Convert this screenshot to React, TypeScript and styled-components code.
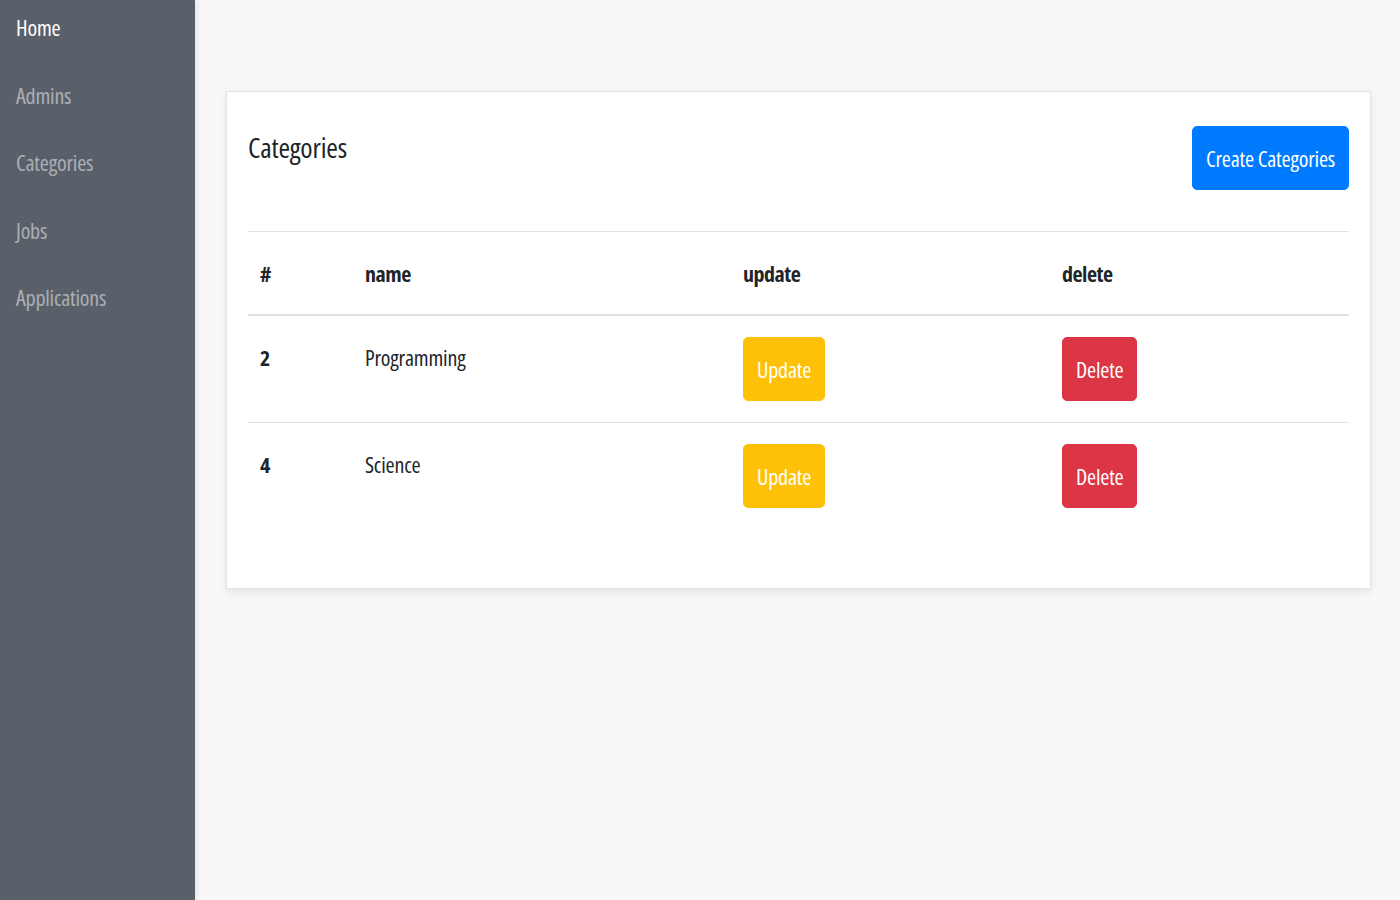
import React from "react";
import styled, { createGlobalStyle } from "styled-components";

const GlobalStyle = createGlobalStyle`
  html, body { margin: 0; padding: 0; }
  body {
    background: #f8f8f8;
    font-family: "Open Sans", "Noto Sans", sans-serif;
    font-stretch: 75%;
    letter-spacing: -0.2px;
    color: #212529;
  }
  * { box-sizing: border-box; }
`;

const Layout = styled.div`
  display: flex;
  min-height: 900px;
`;

const Sidebar = styled.nav`
  width: 195px;
  flex-shrink: 0;
  background: #59606a;
  box-shadow: 2px 0 6px rgba(0, 0, 0, 0.08);
  display: flex;
  flex-direction: column;
`;

const NavLink = styled.a<{ $active?: boolean }>`
  display: block;
  padding: 10px 16px 23.5px;
  font-size: 22px;
  line-height: 34px;
  color: ${(p) => (p.$active ? "#ffffff" : "rgba(255,255,255,0.5)")};
  text-decoration: none;
  cursor: pointer;
`;

const Main = styled.main`
  flex: 1;
  padding: 91px 29px 30px 31px;
`;

const Card = styled.section`
  background: #fff;
  border: 1px solid #e4e4e4;
  box-shadow: 0 3px 8px rgba(0, 0, 0, 0.09);
  padding: 34px 21px 59px;
`;

const Header = styled.div`
  display: flex;
  justify-content: space-between;
  align-items: flex-start;
  margin-bottom: 41px;
`;

const Title = styled.h2`
  margin: 2px 0 0;
  font-size: 28px;
  font-weight: 400;
  line-height: 38px;
`;

const Button = styled.button<{ $variant: "primary" | "warning" | "danger" }>`
  font-family: inherit;
  font-stretch: 75%;
  letter-spacing: -0.2px;
  font-size: 22px;
  line-height: 40px;
  padding: 11px 13px;
  border: 1px solid transparent;
  border-radius: 5px;
  color: #fff;
  cursor: pointer;
  background: ${(p) =>
    p.$variant === "primary" ? "#007bff" : p.$variant === "warning" ? "#ffc107" : "#dc3545"};
  border-color: ${(p) =>
    p.$variant === "primary" ? "#007bff" : p.$variant === "warning" ? "#ffc107" : "#dc3545"};
`;

const Table = styled.table`
  width: 100%;
  border-collapse: collapse;
  table-layout: fixed;
`;

const Col = styled.col<{ $w?: number }>`
  width: ${(p) => (p.$w ? `${p.$w}px` : "auto")};
`;

const Th = styled.th`
  text-align: left;
  font-size: 22px;
  line-height: 40px;
  font-weight: 700;
  letter-spacing: -0.5px;
  padding: 21px 12px;
  border-top: 1px solid #dee2e6;
  border-bottom: 2px solid #dee2e6;
  vertical-align: bottom;
`;

const Td = styled.td<{ $bold?: boolean }>`
  font-size: 22px;
  line-height: 40px;
  font-weight: ${(p) => (p.$bold ? 700 : 400)};
  padding: 21px 12px;
  vertical-align: top;
`;

const Row = styled.tr`
  & + & > td {
    border-top: 1px solid #dee2e6;
  }
`;

const categories = [
  { id: 2, name: "Programming" },
  { id: 4, name: "Science" },
];

export default function App() {
  return (
    <>
      <GlobalStyle />
      <Layout>
        <Sidebar>
          <NavLink $active>Home</NavLink>
          <NavLink>Admins</NavLink>
          <NavLink>Categories</NavLink>
          <NavLink>Jobs</NavLink>
          <NavLink>Applications</NavLink>
        </Sidebar>
        <Main>
          <Card>
            <Header>
              <Title>Categories</Title>
              <Button $variant="primary">Create Categories</Button>
            </Header>
            <Table>
              <colgroup>
                <Col $w={105} />
                <Col $w={378} />
                <Col $w={319} />
                <Col />
              </colgroup>
              <thead>
                <tr>
                  <Th>#</Th>
                  <Th>name</Th>
                  <Th>update</Th>
                  <Th>delete</Th>
                </tr>
              </thead>
              <tbody>
                {categories.map((c) => (
                  <Row key={c.id}>
                    <Td $bold>{c.id}</Td>
                    <Td>{c.name}</Td>
                    <Td>
                      <Button $variant="warning">Update</Button>
                    </Td>
                    <Td>
                      <Button $variant="danger">Delete</Button>
                    </Td>
                  </Row>
                ))}
              </tbody>
            </Table>
          </Card>
        </Main>
      </Layout>
    </>
  );
}
